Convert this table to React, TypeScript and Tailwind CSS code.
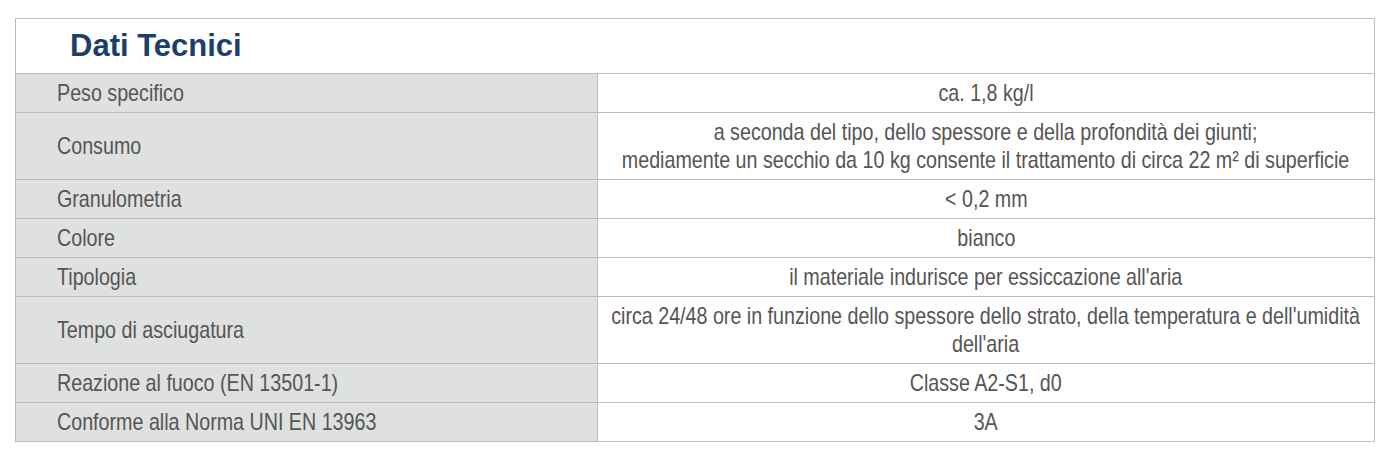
const rows: { label: string; value: React.ReactNode }[] = [
  { label: 'Peso specifico', value: 'ca. 1,8 kg/l' },
  {
    label: 'Consumo',
    value: (
      <>
        a seconda del tipo, dello spessore e della profondità dei giunti;
        <br />
        mediamente un secchio da 10 kg consente il trattamento di circa 22 m² di superficie
      </>
    ),
  },
  { label: 'Granulometria', value: '< 0,2 mm' },
  { label: 'Colore', value: 'bianco' },
  { label: 'Tipologia', value: "il materiale indurisce per essiccazione all'aria" },
  {
    label: 'Tempo di asciugatura',
    value: (
      <>
        circa 24/48 ore in funzione dello spessore dello strato, della temperatura e dell'umidità
        <br />
        dell'aria
      </>
    ),
  },
  { label: 'Reazione al fuoco (EN 13501-1)', value: 'Classe A2-S1, d0' },
  { label: 'Conforme alla Norma UNI EN 13963', value: '3A' },
];

// the source font is a narrow Arial; squeeze Liberation Sans horizontally to match
export default function App() {
  return (
    <div className="min-h-[461px] w-[1395px] bg-white pt-[18px] pl-[15px]">
      <table className="w-[1360px] table-fixed border-collapse text-[#555555] [font-family:'Liberation_Sans',Arial,sans-serif]">
        <colgroup>
          <col className="w-[582px]" />
          <col />
        </colgroup>
        <thead>
          <tr>
            <th
              colSpan={2}
              className="h-[55px] border border-[#bdbdbd] bg-white pl-[54px] text-left text-[31px] font-bold text-[#1b3e6a]"
            >
              Dati Tecnici
            </th>
          </tr>
        </thead>
        <tbody>
          {rows.map((r) => (
            <tr key={r.label}>
              <td className="border border-[#bdbdbd] bg-[#dfe0e0] py-[5px] pl-[41px] text-[24px] leading-[28px]">
                <span className="inline-block origin-left scale-x-[0.82] whitespace-nowrap">{r.label}</span>
              </td>
              <td className="border border-[#bdbdbd] bg-white py-[5px] text-[24px] leading-[28px]">
                <div className="flex justify-center">
                  <span className="inline-block origin-center scale-x-[0.82] whitespace-nowrap text-center">
                    {r.value}
                  </span>
                </div>
              </td>
            </tr>
          ))}
        </tbody>
      </table>
    </div>
  );
}
